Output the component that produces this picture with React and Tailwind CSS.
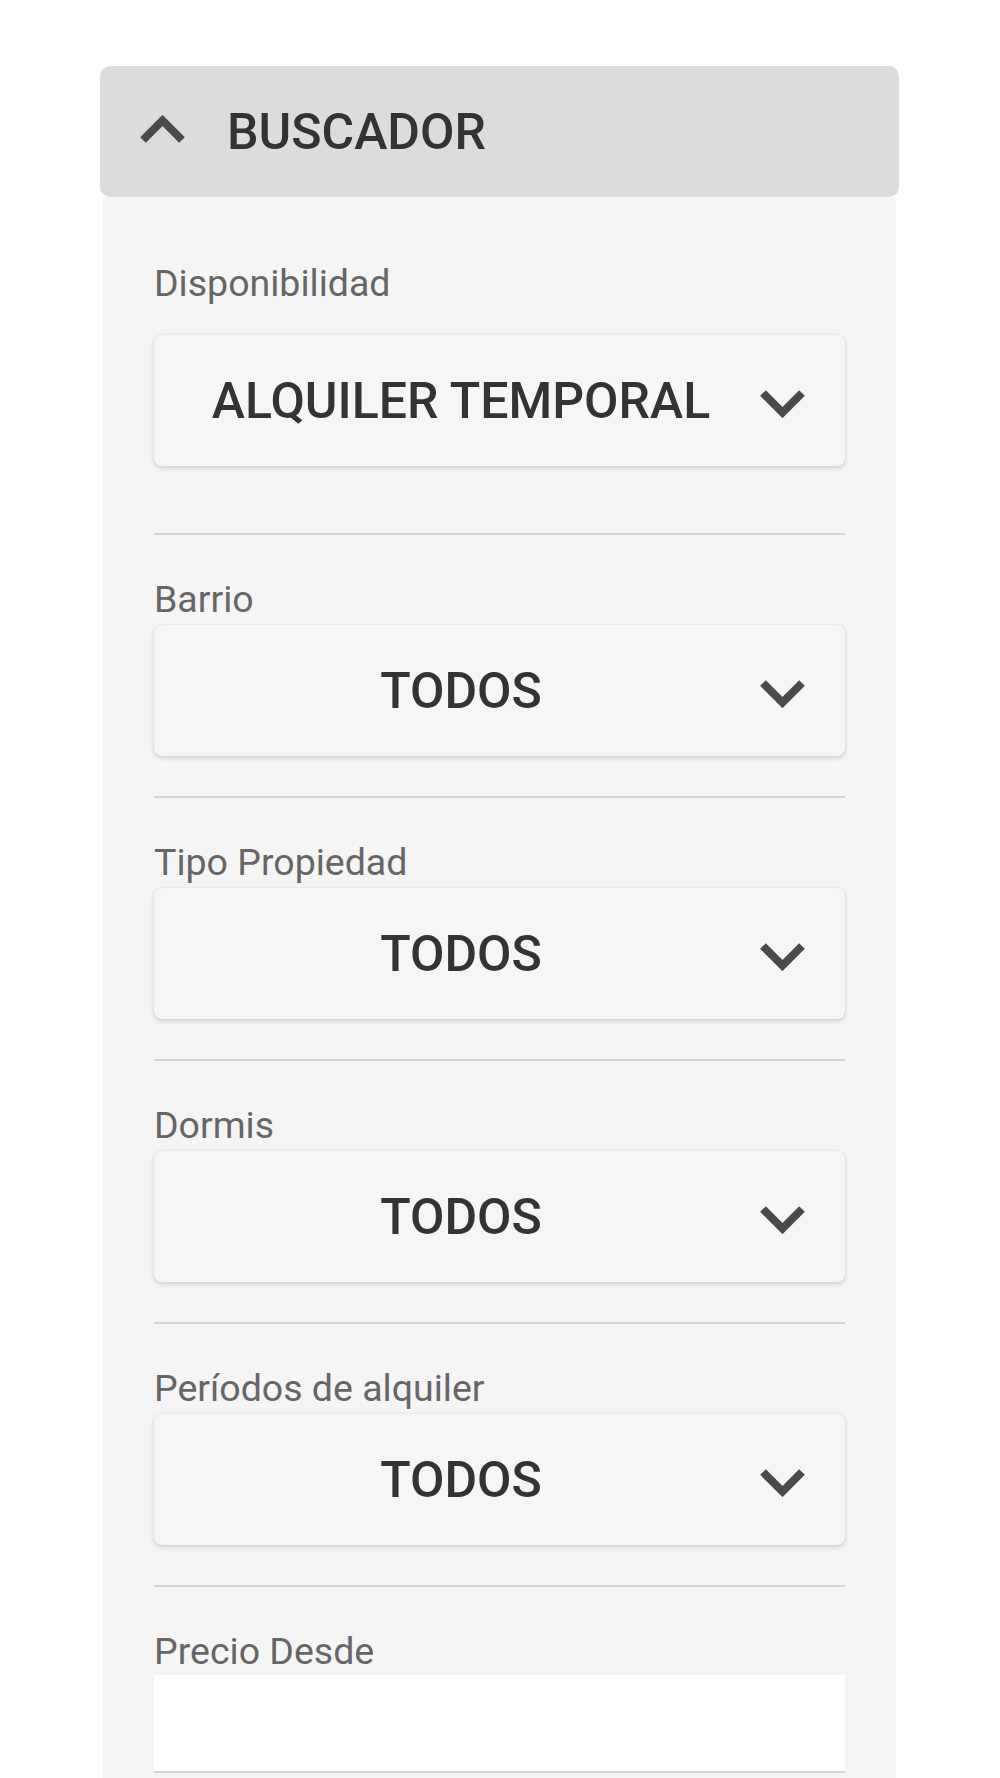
import React from "react";

function ChevronDown() {
  return (
    <svg viewBox="0 0 45 28" className="h-[28px] w-[45px] shrink-0" aria-hidden="true">
      <polyline points="3,3 22.5,22.5 42,3" fill="none" stroke="#4a4a4a" strokeWidth="8" strokeLinejoin="miter" />
    </svg>
  );
}

function ChevronUp() {
  return (
    <svg viewBox="0 0 45 28" className="h-[28px] w-[45px] shrink-0" aria-hidden="true">
      <polyline points="3,25 22.5,5.5 42,25" fill="none" stroke="#4a4a4a" strokeWidth="8" strokeLinejoin="miter" />
    </svg>
  );
}

function Select({ value }) {
  return (
    <div className="flex h-[131px] items-center rounded-[8px] bg-[#f6f6f6] shadow-[0_2px_5px_rgba(0,0,0,0.16),0_0_2px_rgba(0,0,0,0.06)]">
      <span className="flex-1 pl-[8px] text-center text-[50px] font-medium leading-none text-[#333]">{value}</span>
      <span className="mr-[40px] mt-[6px]">
        <ChevronDown />
      </span>
    </div>
  );
}

function Label({ children }) {
  return <p className="text-[37.5px] leading-[42px] text-[#666]">{children}</p>;
}

const Divider = () => <div className="h-[2px] bg-[#d3d3d3]" />;

const FIELDS = ["Barrio", "Tipo Propiedad", "Dormis", "Períodos de alquiler"];

export default function App() {
  return (
    <div className="min-h-screen bg-white pt-[66px]" style={{ fontFamily: "Roboto, 'Liberation Sans', sans-serif" }}>
      <div className="mx-[100px] w-[799px]">
        <div className="flex h-[131px] items-center rounded-[10px] bg-[#dcdcdc] pl-[40px]">
          <span className="-mt-[6px]">
            <ChevronUp />
          </span>
          <h2 className="ml-[42px] text-[50px] font-medium leading-none text-[#333]">BUSCADOR</h2>
        </div>

        <div className="mx-[3px] min-h-[1600px] bg-[#f5f5f5] px-[51px]">
          <div className="pb-[67px] pt-[65px]">
            <Label>Disponibilidad</Label>
            <div className="mt-[31px]">
              <Select value="ALQUILER TEMPORAL" />
            </div>
          </div>
          <Divider />

          {FIELDS.map((f) => (
            <div key={f}>
              <div className="pb-[40px] pt-[43px]">
                <Label>{f}</Label>
                <div className="mt-[5px]">
                  <Select value="TODOS" />
                </div>
              </div>
              <Divider />
            </div>
          ))}

          <div className="pt-[43px]">
            <Label>Precio Desde</Label>
            <div className="mt-[3px] h-[98px] border-b-2 border-[#d3d3d3] bg-white" />
          </div>
        </div>
      </div>
    </div>
  );
}
